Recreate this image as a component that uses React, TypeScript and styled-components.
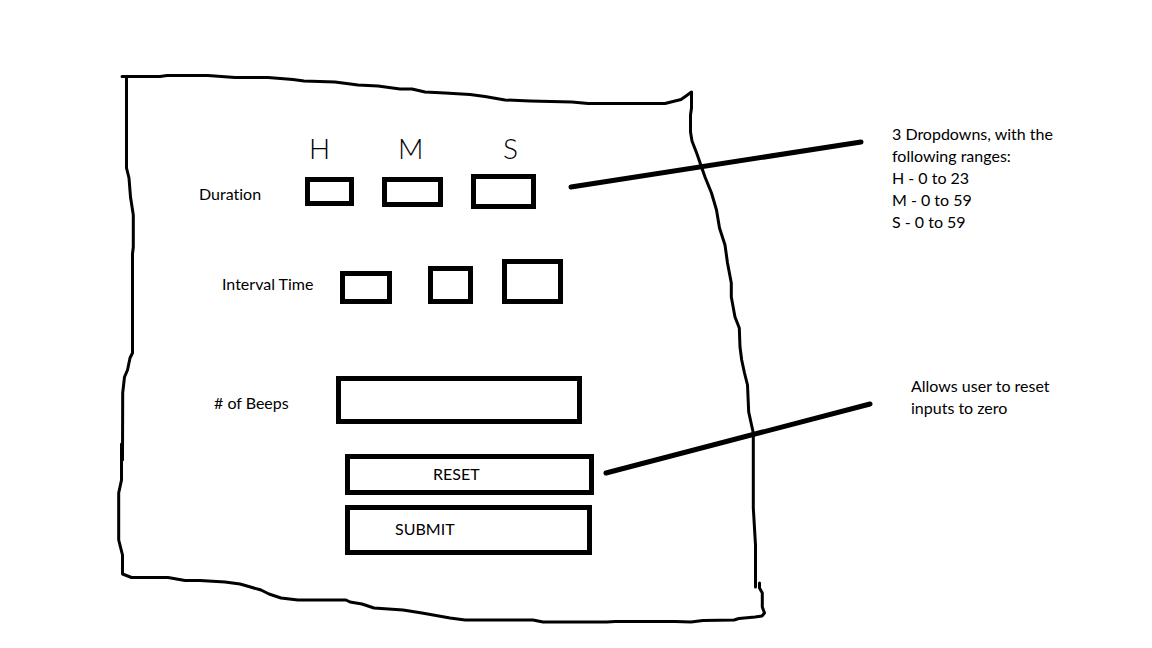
import React from "react";
import styled, { createGlobalStyle } from "styled-components";

const GlobalStyle = createGlobalStyle`
  *, *::before, *::after { box-sizing: border-box; }
  body {
    margin: 0;
    background: #fff;
    color: #000;
    font-family: Lato, "Liberation Sans", sans-serif;
    font-size: 16px;
    font-variant-ligatures: none;
    line-height: 22px;
  }
`;

const Page = styled.main`
  position: relative;
  display: flex;
  align-items: flex-start;
  min-height: 100vh;
`;

const Form = styled.form`
  flex: 0 0 auto;
  width: 892px;
  padding-top: 130px;
`;

const Row = styled.div<{ $indent: number; $tracks: string; $top?: number; $align?: string }>`
  display: grid;
  grid-template-columns: ${(p) => p.$tracks};
  align-items: ${(p) => p.$align ?? "center"};
  justify-items: start;
  margin: ${(p) => p.$top ?? 0}px 0 0 ${(p) => p.$indent}px;
`;

const Caption = styled.label`
  align-self: center;
  padding-top: 5px;
  white-space: nowrap;
`;

const UnitLabel = styled.label<{ $inset: number }>`
  height: 44px;
  padding-left: ${(p) => p.$inset}px;
  font-size: 28px;
  font-weight: 300;
  line-height: 36px;
`;

const Dropdown = styled.select<{ $w: number; $h: number }>`
  appearance: none;
  width: ${(p) => p.$w}px;
  height: ${(p) => p.$h}px;
  margin: 0;
  padding: 0 4px;
  border: 5px solid #000;
  border-radius: 0;
  background: #fff;
  font: inherit;
  line-height: 16px;
`;

const TextBox = styled.input`
  width: 246px;
  height: 48px;
  padding: 0 8px;
  border: 5px solid #000;
  border-radius: 0;
  background: #fff;
  font: inherit;
`;

const Actions = styled.div`
  display: flex;
  flex-direction: column;
  align-items: flex-start;
  gap: 10px;
  margin: 30px 0 0 345px;
`;

const Button = styled.button<{ $w: number; $h: number; $inset: number }>`
  width: ${(p) => p.$w}px;
  height: ${(p) => p.$h}px;
  padding: 0 0 2px ${(p) => p.$inset}px;
  border: 5px solid #000;
  border-radius: 0;
  background: #fff;
  color: inherit;
  font: inherit;
  font-variant-ligatures: none;
  text-align: left;
`;

const Notes = styled.aside`
  flex: 1 1 0;
  max-width: 200px;
  padding-top: 123px;
`;

const Note = styled.p`
  margin: 0;
  & + & {
    margin: 142px 0 0 19px;
  }
`;

const Line = styled.span`
  display: block;
  white-space: nowrap;
`;

const Drawing = styled.svg`
  position: absolute;
  top: 0;
  left: 0;
  width: 892px;
  height: 648px;
  pointer-events: none;
  fill: none;
  stroke: #000;
  stroke-linecap: round;
  stroke-linejoin: round;
`;

function Range({ id, label, max, w, h }: { id: string; label?: string; max: number; w: number; h: number }) {
  return (
    <Dropdown id={id} aria-label={label} defaultValue="" $w={w} $h={h}>
      <option value="" />
      {Array.from({ length: max + 1 }, (_, n) => (
        <option key={n} value={n}>{n}</option>
      ))}
    </Dropdown>
  );
}

export default function App() {
  return (
    <>
      <GlobalStyle />
      <Page>
        <Form onSubmit={(e) => e.preventDefault()}>
          <Row $indent={199} $tracks="106px 77px 89px 65px">
            <span />
            <UnitLabel htmlFor="duration-h" $inset={4}>H</UnitLabel>
            <UnitLabel htmlFor="duration-m" $inset={16}>M</UnitLabel>
            <UnitLabel htmlFor="duration-s" $inset={32}>S</UnitLabel>
            <Caption htmlFor="duration-h">Duration</Caption>
            <Range id="duration-h" max={23} w={49} h={29} />
            <Range id="duration-m" max={59} w={61} h={30} />
            <Range id="duration-s" max={59} w={65} h={35} />
          </Row>
          <Row $indent={222} $top={50} $tracks="118px 88px 74px 61px" $align="end">
            <Caption htmlFor="interval-h">Interval Time</Caption>
            <Range id="interval-h" label="Interval hours" max={23} w={52} h={33} />
            <Range id="interval-m" label="Interval minutes" max={59} w={45} h={38} />
            <Range id="interval-s" label="Interval seconds" max={59} w={61} h={45} />
          </Row>
          <Row $indent={214} $top={72} $tracks="122px 246px">
            <Caption htmlFor="beeps"># of Beeps</Caption>
            <TextBox id="beeps" type="text" inputMode="numeric" />
          </Row>
          <Actions>
            <Button type="reset" $w={249} $h={41} $inset={83}>RESET</Button>
            <Button type="submit" $w={247} $h={50} $inset={45}>SUBMIT</Button>
          </Actions>
        </Form>
        <Notes>
          <Note>
            <Line>3 Dropdowns, with the</Line>
            <Line>following ranges:</Line>
            <Line>H - 0 to 23</Line>
            <Line>M - 0 to 59</Line>
            <Line>S - 0 to 59</Line>
          </Note>
          <Note>
            <Line>Allows user to reset</Line>
            <Line>inputs to zero</Line>
          </Note>
        </Notes>
        <Drawing viewBox="0 0 892 648" aria-hidden="true">
          <g strokeWidth="3">
            <path d="M122 76.500H160L167 75.500H208L235 77.500H268L293 79.500L304 81L335 82L358 85L378 86L400 89H412L425 92L445 93L470 94.500L485 96.500L505 100L530 101L572 102L588 103.500H665L681 99.500L686 96L691.500 92V108L690.500 115V132L692 141L697 154L701.500 167L705 177L711.500 193L716.500 210L719.500 228L725 245L727.500 263L731.300 283V297L735 317L739.300 328L740 347L741.700 360L744.500 373L747.500 385L748.700 412L753.300 433V508L755.500 545V587" />
            <path d="M126.500 77V168L129 178L130.500 197L133.300 215V247L132.500 254V353L130 358L127.500 370L124.500 377L122.700 393L122.500 460M121.500 444V480L118.700 493V540L122.500 555V574L131.500 577.500H168L185 580.500H200L225 582L240 584L247 586L261 590L269 594L281 598L298 600H346L350 602L362 604L374 608L403 610L422 613L450 618L465 620H533L543 622H607L615 621.500H675L691 622L703 620.500L734 620L739 618.500L755 617L762 616L764.500 613L762.300 607V593L759.500 588V583" />
          </g>
          <g strokeWidth="5">
            <path d="M571 187L861 142" />
            <path d="M606 473L870 404" />
          </g>
        </Drawing>
      </Page>
    </>
  );
}
